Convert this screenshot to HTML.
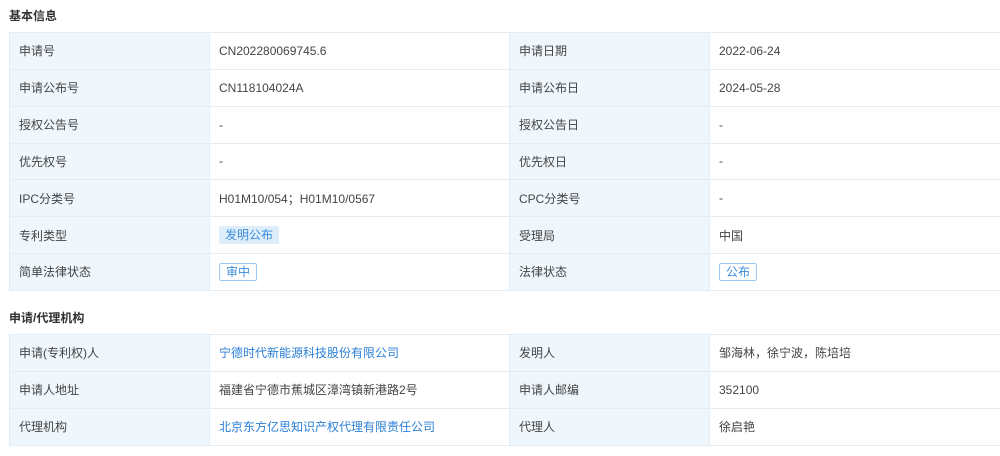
<!DOCTYPE html>
<html><head><meta charset="utf-8"><style>
body{margin:0;width:1000px;height:456px;background:#fff;font-family:"Liberation Sans","Noto Sans CJK SC",sans-serif;font-size:12px;color:#444;overflow:hidden}
h3{margin:0;position:absolute;left:9px;font-size:12px;font-weight:bold;color:#333}
table{position:absolute;left:9px;width:1000px;border-collapse:collapse;table-layout:fixed}
td{height:35.85px;border:1px solid #e3edf6;padding:0 0 0 9px;vertical-align:middle;white-space:nowrap}
td.l{background:#eff7fd}
td.v{padding-top:1px;height:34.85px}
.a{color:#2a7fd6}
.t1{display:inline-block;background:#deeefb;color:#3c8ddb;padding:0 6px;line-height:18px}
.t2{display:inline-block;border:1px solid #9cc8ef;color:#3c8ddb;padding:0 6px;line-height:16px;border-radius:2px}
</style></head><body>
<h3 style="top:7px">基本信息</h3>
<table style="top:32px">
<colgroup><col style="width:200px"><col style="width:300px"><col style="width:200px"><col></colgroup>
<tr><td class="l">申请号</td><td class="v">CN202280069745.6</td><td class="l">申请日期</td><td class="v">2022-06-24</td></tr>
<tr><td class="l">申请公布号</td><td class="v">CN118104024A</td><td class="l">申请公布日</td><td class="v">2024-05-28</td></tr>
<tr><td class="l">授权公告号</td><td>-</td><td class="l">授权公告日</td><td>-</td></tr>
<tr><td class="l">优先权号</td><td>-</td><td class="l">优先权日</td><td>-</td></tr>
<tr><td class="l">IPC分类号</td><td>H01M10/054；H01M10/0567</td><td class="l">CPC分类号</td><td>-</td></tr>
<tr><td class="l">专利类型</td><td><span class="t1">发明公布</span></td><td class="l">受理局</td><td>中国</td></tr>
<tr><td class="l">简单法律状态</td><td><span class="t2">审中</span></td><td class="l">法律状态</td><td><span class="t2">公布</span></td></tr>
</table>
<h3 style="top:309px">申请/代理机构</h3>
<table style="top:334px">
<colgroup><col style="width:200px"><col style="width:300px"><col style="width:200px"><col></colgroup>
<tr><td class="l">申请(专利权)人</td><td class="a">宁德时代新能源科技股份有限公司</td><td class="l">发明人</td><td>邹海林，徐宁波，陈培培</td></tr>
<tr><td class="l">申请人地址</td><td>福建省宁德市蕉城区漳湾镇新港路2号</td><td class="l">申请人邮编</td><td class="v">352100</td></tr>
<tr><td class="l">代理机构</td><td class="a">北京东方亿思知识产权代理有限责任公司</td><td class="l">代理人</td><td>徐启艳</td></tr>
</table>
</body></html>
